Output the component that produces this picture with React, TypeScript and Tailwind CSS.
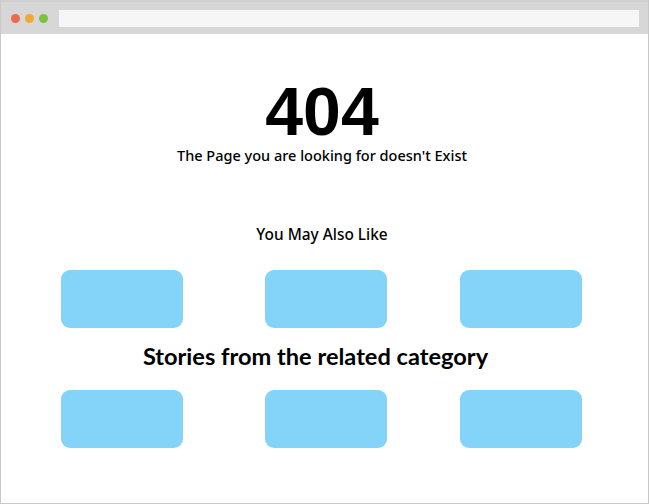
export default function App() {
  const Box = () => <div className="h-[58px] w-[122px] rounded-[9px] bg-[#84d3f9]" />;
  return (
    <div className="h-[504px] w-[650px] overflow-hidden bg-white">
      <div className="flex h-[504px] w-[649px] flex-col border-b border-l border-r border-[#c9c9c9]">
        <div className="flex h-[34px] items-center border-t-2 border-[#cfcfcf] bg-[#d7d7d7] pl-[10px] pr-[9px]">
          <div className="flex gap-[5px]">
            <span className="h-[9px] w-[9px] rounded-full bg-[#ec6b4d]" />
            <span className="h-[9px] w-[9px] rounded-full bg-[#eeaa35]" />
            <span className="h-[9px] w-[9px] rounded-full bg-[#7cc242]" />
          </div>
          <div className="ml-[11px] h-[17px] flex-1 bg-[#f6f6f6]" />
        </div>
        <div className="flex flex-col items-center pr-[5px]">
          <div className="mt-[38px] text-[68px] font-bold leading-[78px] text-black" style={{ fontFamily: '"Liberation Sans", Arial, sans-serif' }}>
            404
          </div>
          <div className="mt-[-5px] text-[14.5px] font-medium leading-[20px] text-black" style={{ fontFamily: '"Noto Sans", sans-serif' }}>
            The Page you are looking for doesn't Exist
          </div>
          <div className="mt-[59px] text-[15.4px] font-medium leading-[22px] text-black" style={{ fontFamily: '"Noto Sans", sans-serif' }}>
            You May Also Like
          </div>
        </div>
        <div className="mt-[24px] flex pl-[60px]">
          <Box />
          <div className="ml-[82px]"><Box /></div>
          <div className="ml-[73px]"><Box /></div>
        </div>
        <div className="mt-[13px] flex justify-center pr-[18px]">
          <div className="text-[23.6px] font-bold leading-[30px] text-black" style={{ fontFamily: 'Lato, sans-serif' }}>
            Stories from the related category
          </div>
        </div>
        <div className="mt-[19px] flex pl-[60px]">
          <Box />
          <div className="ml-[82px]"><Box /></div>
          <div className="ml-[73px]"><Box /></div>
        </div>
      </div>
    </div>
  );
}
